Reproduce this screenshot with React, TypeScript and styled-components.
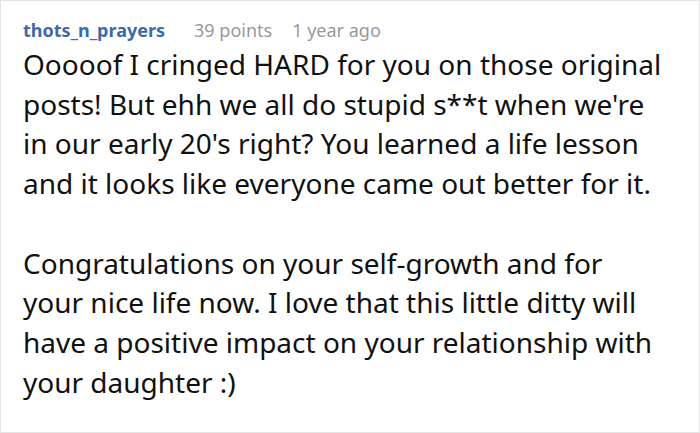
import React from 'react'
import styled, { createGlobalStyle } from 'styled-components'

const GlobalStyle = createGlobalStyle`
  html, body {
    margin: 0;
    padding: 0;
    background: #fff;
  }
`

const CommentWrap = styled.div`
  box-sizing: border-box;
  width: 700px;
  height: 433px;
  border: 1px solid #e4e4e4;
  background: #fff;
  padding: 16px 30px 0 22px;
  overflow: hidden;
`

const Meta = styled.div`
  display: flex;
  align-items: baseline;
  font-family: 'Noto Sans', sans-serif;
  font-size: 18px;
  line-height: 26px;
`

const Author = styled.span`
  font-weight: 700;
  color: #3d6aa6;
  margin-right: 29px;
`

const MetaText = styled.span<{ $gap?: number }>`
  color: #999999;
  margin-right: ${p => p.$gap ?? 0}px;
`

const Body = styled.div`
  font-family: 'Noto Sans', sans-serif;
  font-size: 28px;
  line-height: 39.7px;
  color: #111;
  margin-top: 2px;
`

const Paragraph = styled.p`
  margin: 0 0 39.7px 0;
`

const Comment: React.FC = () => {
  return (
    <CommentWrap>
      <Meta>
        <Author>thots_n_prayers</Author>
        <MetaText $gap={20}>39 points</MetaText>
        <MetaText>1 year ago</MetaText>
      </Meta>
      <Body>
        <Paragraph>
          Ooooof I cringed HARD for you on those original posts! But ehh we all do stupid s**t when we're in our early 20's right? You learned a life lesson and it looks like everyone came out better for it.
        </Paragraph>
        <Paragraph>
          Congratulations on your self-growth and for your nice life now. I love that this little ditty will have a positive impact on your relationship with your daughter :)
        </Paragraph>
      </Body>
    </CommentWrap>
  )
}

const App: React.FC = () => (
  <>
    <GlobalStyle />
    <Comment />
  </>
)

export default App
